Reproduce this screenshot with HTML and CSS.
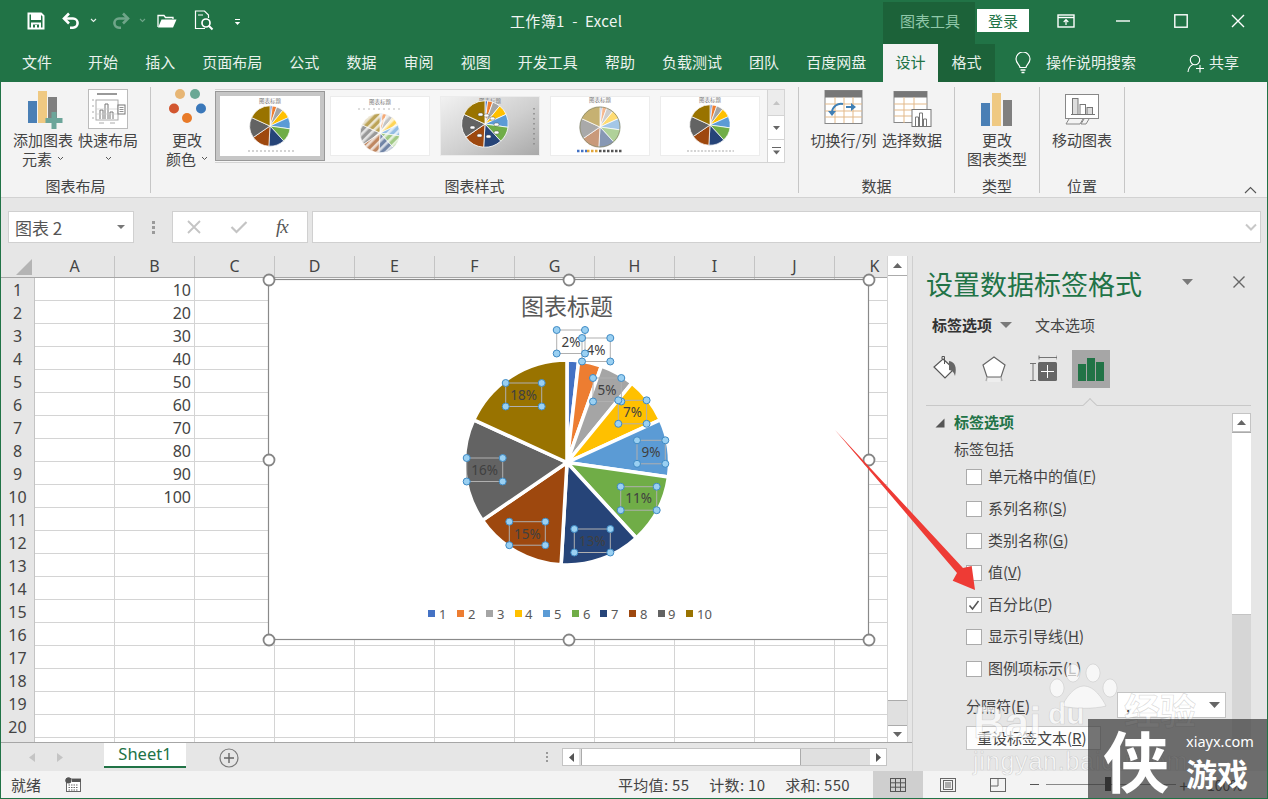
FILE: index.html
```html
<!DOCTYPE html>
<html lang="zh-CN">
<head>
<meta charset="utf-8">
<title>工作簿1 - Excel</title>
<link rel="stylesheet" href="styles.css">
</head>
<body>
<svg class="defs" width="0" height="0" aria-hidden="true">
  <defs>
    <g id="pie" class="pie">
      <path fill="#4472c4" d="M0 0L0 -101A101 101 0 0 1 11.5 -100.3Z"/>
      <path fill="#ed7d31" d="M0 0L11.5 -100.3A101 101 0 0 1 33.9 -95.1Z"/>
      <path fill="#a5a5a5" d="M0 0L33.9 -95.1A101 101 0 0 1 63.9 -78.2Z"/>
      <path fill="#ffc000" d="M0 0L63.9 -78.2A101 101 0 0 1 91.9 -42Z"/>
      <path fill="#5b9bd5" d="M0 0L91.9 -42A101 101 0 0 1 100 14.4Z"/>
      <path fill="#70ad47" d="M0 0L100 14.4A101 101 0 0 1 68.3 74.4Z"/>
      <path fill="#264478" d="M0 0L68.3 74.4A101 101 0 0 1 -5.8 100.8Z"/>
      <path fill="#9e480e" d="M0 0L-5.8 100.8A101 101 0 0 1 -83.4 57Z"/>
      <path fill="#636363" d="M0 0L-83.4 57A101 101 0 0 1 -91.9 -42Z"/>
      <path fill="#997300" d="M0 0L-91.9 -42A101 101 0 0 1 0 -101Z"/>
    </g>
    <pattern id="stripes" width="6" height="6" patternUnits="userSpaceOnUse" patternTransform="rotate(45)">
      <rect width="6" height="6" fill="none"/><rect width="2.6" height="6" fill="#fff" fill-opacity=".72"/>
    </pattern>
    <linearGradient id="silver" x1="0" x2="1" y1="0" y2="1">
      <stop offset="0" stop-color="#f2f2f2"/><stop offset=".55" stop-color="#cfcfcf"/><stop offset="1" stop-color="#a8a8a8"/>
    </linearGradient>
  </defs>
</svg>

<div class="app">
  <header class="titlebar">
    <div class="qat">
      <svg class="q-save" width="18" height="18" viewBox="0 0 18 18"><path d="M1.5 1.5h12.5l2.5 2.5v12.5h-15z" fill="none" stroke="#fff" stroke-width="2"/><rect x="4" y="2" width="10" height="6" fill="#fff"/><path d="M5 16.5v-5h8v5" fill="none" stroke="#fff" stroke-width="2"/><rect x="8" y="13" width="2" height="3" fill="#fff"/></svg>
      <svg class="q-undo" width="20" height="18" viewBox="0 0 20 18"><path d="M4 6.5h8a4.6 4.6 0 0 1 0 9.2H9" fill="none" stroke="#fff" stroke-width="2.6"/><path d="M8 1.5L3 6.5l5 5" fill="none" stroke="#fff" stroke-width="2.6"/></svg>
      <svg class="q-caret" width="7" height="5" viewBox="0 0 7 5"><path d="M1 1l2.5 2.5L6 1" fill="none" stroke="#e8f0eb" stroke-width="1.1"/></svg>
      <svg class="q-redo" width="20" height="18" viewBox="0 0 20 18"><path d="M16 6.5H8a4.6 4.6 0 0 0 0 9.2h2" fill="none" stroke="#6fa589" stroke-width="2.6"/><path d="M12 1.5l5 5-5 5" fill="none" stroke="#6fa589" stroke-width="2.6"/></svg>
      <svg class="q-caret2" width="7" height="5" viewBox="0 0 7 5"><path d="M1 1l2.5 2.5L6 1" fill="none" stroke="#6fa589" stroke-width="1.1"/></svg>
      <svg class="q-open" width="20" height="16" viewBox="0 0 20 16"><path d="M1 14V2.5h6l1.5 2H16V6" fill="none" stroke="#fff" stroke-width="1.3"/><path d="M1 14.5L4.5 6.5H19.5L16 14.5z" fill="#fff"/></svg>
      <svg class="q-prev" width="20" height="21" viewBox="0 0 20 21"><path d="M11 18.5H1.5V1h9l4 4v3" fill="none" stroke="#fff" stroke-width="1.2"/><circle cx="12" cy="13" r="4" fill="none" stroke="#fff" stroke-width="1.7"/><path d="M15 16l3.5 3.5" stroke="#fff" stroke-width="2"/><path d="M4 5h5" stroke="#fff"/></svg>
      <svg class="q-more" width="7" height="8" viewBox="0 0 7 8"><path d="M1 1.5h5" stroke="#fff"/><path d="M.8 4h5.4L3.5 7z" fill="#fff"/></svg>
    </div>
    <div class="doc-title">工作簿1&nbsp; - &nbsp;Excel</div>
    <div class="ctx-tag">图表工具</div>
    <div class="login">登录</div>
    <div class="winbtns">
      <span class="winbtn"><svg width="18" height="14" viewBox="0 0 18 14"><rect x="1" y="1" width="16" height="12" fill="none" stroke="#fff" stroke-width="1.4"/><path d="M1 3.5h16" stroke="#fff" stroke-width="1.4"/><path d="M9 11V6M6.7 8L9 5.7 11.3 8" fill="none" stroke="#fff" stroke-width="1.2"/></svg></span>
      <span class="winbtn"><svg width="14" height="2" viewBox="0 0 14 2"><path d="M0 1h14" stroke="#fff" stroke-width="1.4"/></svg></span>
      <span class="winbtn"><svg width="14" height="14" viewBox="0 0 14 14"><rect x=".8" y=".8" width="12.4" height="12.4" fill="none" stroke="#fff" stroke-width="1.4"/></svg></span>
      <span class="winbtn"><svg width="14" height="14" viewBox="0 0 14 14"><path d="M1 1l12 12M13 1L1 13" stroke="#fff" stroke-width="1.4"/></svg></span>
    </div>
  </header>

  <nav class="tabs">
    <span class="tab tab-file">文件</span>
    <span class="tab">开始</span>
    <span class="tab">插入</span>
    <span class="tab">页面布局</span>
    <span class="tab">公式</span>
    <span class="tab">数据</span>
    <span class="tab">审阅</span>
    <span class="tab">视图</span>
    <span class="tab">开发工具</span>
    <span class="tab">帮助</span>
    <span class="tab">负载测试</span>
    <span class="tab">团队</span>
    <span class="tab tab-last">百度网盘</span>
    <span class="tab-active">设计</span>
    <span class="tab-dark">格式</span>
    <svg class="bulb" width="16" height="22" viewBox="0 0 16 22"><path d="M5 15.5C4.6 12.5 1 11 1 7a7 7 0 0 1 14 0c0 4-3.600 5.500-4 8.500z" fill="none" stroke="#fff" stroke-width="1.2"/><path d="M5.500 18h5M6.500 20.500h3" stroke="#fff" stroke-width="1.300"/></svg>
    <span class="search">操作说明搜索</span>
    <svg class="person" width="18" height="19" viewBox="0 0 18 19"><circle cx="8" cy="6" r="4.700" fill="none" stroke="#fff" stroke-width="1.100"/><path d="M1 18c.5-4 2.500-6.500 5-7.500" fill="none" stroke="#fff" stroke-width="1.100"/><path d="M9 14.500h8M13 11v7.500" stroke="#fff" stroke-width="1.100"/></svg>
    <span class="share">共享</span>
  </nav>

  <section class="ribbon">
    <div class="group g1">
      <div class="g-body">
        <div class="bigbtn w60">
          <svg class="ico" width="44" height="44" viewBox="0 0 44 44"><rect x="7" y="14" width="9" height="22" fill="#4a7fb5"/><rect x="17" y="4" width="9" height="32" fill="#efc982"/><rect x="27" y="10" width="9" height="26" fill="#7f7f7f"/><path d="M33 25v17M24.500 33.500h17" stroke="#6ca59a" stroke-width="5"/></svg>
          <span class="bl">添加图表</span>
          <span class="bl">元素<svg class="chev" width="7" height="5" viewBox="0 0 7 5"><path d="M1 1l2.500 2.500L6 1" fill="none" stroke="#555"/></svg></span>
        </div>
        <div class="bigbtn w60">
          <svg class="ico" width="44" height="44" viewBox="0 0 44 44"><rect x="2.500" y="2.500" width="39" height="39" fill="#fff" stroke="#bbb"/><path d="M11 7h20" stroke="#999" stroke-width="2"/><path d="M6 13h2M6 19h2M6 25h2M6 31h2M13 36h5M24 36h5" stroke="#aaa"/><rect x="10" y="13" width="22" height="20" fill="none" stroke="#aaa"/><path d="M14 32v-9h3v9M19 32V17h3v15M24 32v-7h3v7" fill="none" stroke="#777"/><path d="M10 22h22M10 27h22" stroke="#ccc" stroke-width=".7"/><rect x="32" y="18" width="7" height="9" fill="#fff" stroke="#777"/><path d="M33.500 20.500h4M33.500 22.500h4M33.500 24.500h4" stroke="#777" stroke-width=".8"/></svg>
          <span class="bl">快速布局</span>
          <span class="bl"><svg class="chev-only" width="7" height="5" viewBox="0 0 7 5"><path d="M1 1l2.500 2.500L6 1" fill="none" stroke="#555"/></svg></span>
        </div>
      </div>
      <div class="g-label">图表布局</div>
    </div>

    <div class="group g2">
      <div class="g-body">
        <div class="bigbtn w44">
          <svg class="ico" width="44" height="44" viewBox="0 0 44 44"><circle cx="15" cy="7" r="5" fill="#e7b675"/><circle cx="30" cy="7" r="5" fill="#6aa895"/><circle cx="9" cy="21.500" r="5" fill="#d2562f"/><circle cx="36" cy="21.500" r="5" fill="#3a78ba"/><circle cx="22" cy="31" r="5" fill="#e87a28"/></svg>
          <span class="bl">更改</span>
          <span class="bl">颜色<svg class="chev" width="7" height="5" viewBox="0 0 7 5"><path d="M1 1l2.500 2.500L6 1" fill="none" stroke="#555"/></svg></span>
        </div>
        <div class="gallery">
          <div class="thumb thumb-sel">
            <svg width="100" height="60" viewBox="0 0 100 60"><text class="th-title" x="50" y="7">图表标题</text><use href="#pie" transform="translate(50 30) scale(.2)"/><path d="M28 55h47" stroke="#aaa" stroke-width="1.200" stroke-dasharray="2 2"/></svg>
          </div>
          <div class="thumb">
            <svg width="100" height="60" viewBox="0 0 100 60"><text class="th-title" x="50" y="8">图表标题</text><path d="M28 13h44" stroke="#bbb" stroke-width="1" stroke-dasharray="2 3"/><use href="#pie" transform="translate(50 37) scale(.195)" opacity=".65"/><circle cx="50" cy="37" r="19.500" fill="url(#stripes)"/></svg>
          </div>
          <div class="thumb thumb-m">
            <svg width="100" height="60" viewBox="0 0 100 60"><rect width="100" height="60" fill="url(#silver)"/><text class="th-title" x="50" y="7">图表标题</text><use href="#pie" transform="translate(45 28) scale(.23)"/><g fill="#fff" stroke="#555" stroke-width=".5"><rect x="38" y="17" width="5" height="3" rx="1.500"/><rect x="44" y="18" width="5" height="3" rx="1.500"/><rect x="50" y="21" width="5" height="3" rx="1.500"/><rect x="54" y="27" width="5" height="3" rx="1.500"/><rect x="54" y="35" width="5" height="3" rx="1.500"/><rect x="46" y="39" width="5" height="3" rx="1.500"/><rect x="37" y="38" width="5" height="3" rx="1.500"/><rect x="30" y="30" width="5" height="3" rx="1.500"/></g><path d="M94 12v38" stroke="#888" stroke-width="1.500" stroke-dasharray="1.500 3.500"/></svg>
          </div>
          <div class="thumb thumb-m">
            <svg width="100" height="60" viewBox="0 0 100 60"><text class="th-title" x="50" y="6">图表标题</text><use href="#pie" transform="translate(50 31) scale(.205)" opacity=".55"/><circle cx="50" cy="31" r="20" fill="none" stroke="#8d8d6c" stroke-width=".8"/><g stroke-width="2.500" stroke-dasharray="2.500 1.500"><path d="M27 55h10" stroke="#4472c4"/><path d="M37 55h12" stroke="#e0a53a"/><path d="M49 55h24" stroke="#555"/></g></svg>
          </div>
          <div class="thumb thumb-m">
            <svg width="100" height="60" viewBox="0 0 100 60"><text class="th-title" x="50" y="6">图表标题</text><use href="#pie" transform="translate(50 29) scale(.2)"/><path d="M27 55h47" stroke="#aaa" stroke-width="1.200" stroke-dasharray="2 1.500"/></svg>
          </div>
          <div class="gal-scroll">
            <span class="gs gs1"><svg width="7" height="4" viewBox="0 0 7 4"><path d="M0 4l3.500-4L7 4z" fill="#c4c4c4"/></svg></span>
            <span class="gs gs2"><svg width="7" height="4" viewBox="0 0 7 4"><path d="M0 0l3.500 4L7 0z" fill="#666"/></svg></span>
            <span class="gs gs3"><svg width="9" height="8" viewBox="0 0 9 8"><path d="M0 .5h9" stroke="#666"/><path d="M1 3.500l3.500 4 3.500-4z" fill="#666"/></svg></span>
          </div>
        </div>
      </div>
      <div class="g-label">图表样式</div>
    </div>

    <div class="group g3">
      <div class="g-body">
        <div class="bigbtn w65">
          <svg class="ico" width="44" height="44" viewBox="0 0 44 44"><rect x="3" y="3.500" width="37" height="33" fill="#fff" stroke="#888"/><rect x="3" y="3.500" width="37" height="7" fill="#777"/><path d="M3 17h37M3 24h37M3 30h37M13 10v26M22 10v26M31 10v26" stroke="#e3b989"/><path d="M10 25a9 9 0 0 1 11-8" fill="none" stroke="#3f7fb5" stroke-width="2"/><path d="M6 24l4 5 4-5z" fill="#3f7fb5"/><path d="M24 20h7" stroke="#3f7fb5" stroke-width="2"/><path d="M29 16l5 4-5 4z" fill="#3f7fb5"/></svg>
          <span class="bl">切换行/列</span>
        </div>
        <div class="bigbtn w60 ml6">
          <svg class="ico" width="44" height="44" viewBox="0 0 44 44"><rect x="4" y="4.500" width="33" height="31" fill="#fff" stroke="#888"/><rect x="4" y="4.500" width="33" height="6" fill="#777"/><path d="M4 17h33M4 23h33M4 29h33M14 10v26M24 10v26" stroke="#e3b989"/><rect x="22" y="22.500" width="19" height="17" fill="#fff" stroke="#777"/><path d="M25.500 39v-9h3v9M29.500 39V26h3v13M33.500 39v-7h3v7" fill="none" stroke="#777"/></svg>
          <span class="bl">选择数据</span>
        </div>
      </div>
      <div class="g-label">数据</div>
    </div>

    <div class="group g4">
      <div class="g-body gb-c">
        <div class="bigbtn w60">
          <svg class="ico" width="44" height="44" viewBox="0 0 44 44"><rect x="6" y="16" width="9" height="23" fill="#4a7fb5"/><rect x="17" y="6" width="9" height="33" fill="#efc982"/><rect x="28" y="13" width="9" height="26" fill="#7f7f7f"/></svg>
          <span class="bl">更改</span>
          <span class="bl">图表类型</span>
        </div>
      </div>
      <div class="g-label">类型</div>
    </div>

    <div class="group g5">
      <div class="g-body gb-c">
        <div class="bigbtn w60">
          <svg class="ico" width="44" height="44" viewBox="0 0 44 44"><rect x="5.500" y="7.500" width="33" height="24" fill="#fff" stroke="#888"/><path d="M11 27.500h24" stroke="#777"/><rect x="12.500" y="11.500" width="5.500" height="16" fill="#ddd" stroke="#777"/><rect x="20" y="17.500" width="5.500" height="10" fill="#fff" stroke="#777"/><rect x="27" y="20.500" width="5.500" height="7" fill="#ddd" stroke="#777"/><path d="M9 32l-3 5h14l3-5M24 32l-3 5h5l3-5" fill="none" stroke="#888"/></svg>
          <span class="bl">移动图表</span>
        </div>
      </div>
      <div class="g-label">位置</div>
    </div>
    <svg class="collapse" width="13" height="8" viewBox="0 0 13 8"><path d="M1 7l5.500-5.500L12 7" fill="none" stroke="#555" stroke-width="1.100"/></svg>
  </section>

  <div class="fbar">
    <div class="namebox"><span>图表 2</span><svg width="8" height="4" viewBox="0 0 8 4"><path d="M0 0l4 4 4-4z" fill="#777"/></svg></div>
    <div class="fdots"><i></i><i></i><i></i></div>
    <div class="fbtns">
      <svg width="16" height="14" viewBox="0 0 16 14"><path d="M2 1l12 12M14 1L2 13" stroke="#c4c4c4" stroke-width="1.800"/></svg>
      <svg width="18" height="14" viewBox="0 0 18 14"><path d="M1.500 7l5 5L16.500 2" fill="none" stroke="#c4c4c4" stroke-width="2.200"/></svg>
      <span class="fx">fx</span>
    </div>
    <div class="finput"><svg width="12" height="8" viewBox="0 0 12 8"><path d="M1 1.500l5 5 5-5" fill="none" stroke="#c8c8c8" stroke-width="2"/></svg></div>
  </div>

  <main class="main">
    <div class="leftcol">
      <div class="sheetrow">
        <div class="sheet">
          <div class="colhead">
            <span class="corner"><svg width="16" height="16" viewBox="0 0 16 16"><path d="M16 0v16H0z" fill="#b4b4b4"/></svg></span>
            <span class="ch">A</span><span class="ch">B</span><span class="ch">C</span><span class="ch">D</span><span class="ch">E</span><span class="ch">F</span><span class="ch">G</span><span class="ch">H</span><span class="ch">I</span><span class="ch">J</span><span class="ch">K</span>
          </div>
          <div class="rows">
            <div class="row"><span class="rh">1</span><span class="c"></span><span class="c n">10</span></div>
            <div class="row"><span class="rh">2</span><span class="c"></span><span class="c n">20</span></div>
            <div class="row"><span class="rh">3</span><span class="c"></span><span class="c n">30</span></div>
            <div class="row"><span class="rh">4</span><span class="c"></span><span class="c n">40</span></div>
            <div class="row"><span class="rh">5</span><span class="c"></span><span class="c n">50</span></div>
            <div class="row"><span class="rh">6</span><span class="c"></span><span class="c n">60</span></div>
            <div class="row"><span class="rh">7</span><span class="c"></span><span class="c n">70</span></div>
            <div class="row"><span class="rh">8</span><span class="c"></span><span class="c n">80</span></div>
            <div class="row"><span class="rh">9</span><span class="c"></span><span class="c n">90</span></div>
            <div class="row"><span class="rh">10</span><span class="c"></span><span class="c n">100</span></div>
            <div class="row"><span class="rh">11</span></div>
            <div class="row"><span class="rh">12</span></div>
            <div class="row"><span class="rh">13</span></div>
            <div class="row"><span class="rh">14</span></div>
            <div class="row"><span class="rh">15</span></div>
            <div class="row"><span class="rh">16</span></div>
            <div class="row"><span class="rh">17</span></div>
            <div class="row"><span class="rh">18</span></div>
            <div class="row"><span class="rh">19</span></div>
            <div class="row"><span class="rh">20</span></div>
            <div class="row"><span class="rh"></span></div>
          </div>
        </div>
        <div class="vscroll">
          <span class="vs-btn"><svg width="9" height="5" viewBox="0 0 9 5"><path d="M0 5l4.500-5L9 5z" fill="#666"/></svg></span>
          <span class="vs-thumb"></span>
          <span class="vs-track"></span>
          <span class="vs-btn vs-btn-b"><svg width="9" height="5" viewBox="0 0 9 5"><path d="M0 0l4.500 5L9 0z" fill="#666"/></svg></span>
        </div>
      </div>
      <div class="tabsrow">
        <svg class="nav-l" width="6" height="9" viewBox="0 0 6 9"><path d="M6 0v9L0 4.500z" fill="#c4c4c4"/></svg>
        <svg class="nav-r" width="6" height="9" viewBox="0 0 6 9"><path d="M0 0v9l6-4.500z" fill="#c4c4c4"/></svg>
        <div class="sheet-tab">Sheet1</div>
        <svg class="addsheet" width="20" height="20" viewBox="0 0 20 20"><circle cx="10" cy="10" r="9" fill="none" stroke="#7a7a7a" stroke-width="1.200"/><path d="M10 5v10M5 10h10" stroke="#666" stroke-width="1.400"/></svg>
        <div class="hdots"><i></i><i></i><i></i></div>
        <div class="hscroll">
          <span class="hs-btn"><svg width="5" height="9" viewBox="0 0 5 9"><path d="M5 0v9L0 4.500z" fill="#555"/></svg></span>
          <span class="hs-thumb"></span>
          <span class="hs-track"></span>
          <span class="hs-btn"><svg width="5" height="9" viewBox="0 0 5 9"><path d="M0 0v9l5-4.500z" fill="#555"/></svg></span>
        </div>
      </div>
    </div>

    <aside class="pane">
      <div class="pane-head">
        <h2 class="pane-title">设置数据标签格式</h2>
        <svg class="pane-caret" width="11" height="6" viewBox="0 0 11 6"><path d="M0 0l5.500 6L11 0z" fill="#7a7a7a"/></svg>
        <svg class="pane-x" width="12" height="12" viewBox="0 0 12 12"><path d="M.5.500l11 11M11.500.500l-11 11" stroke="#666" stroke-width="1.400"/></svg>
      </div>
      <div class="pane-tabs">
        <b>标签选项</b>
        <svg class="pt-caret" width="12" height="6" viewBox="0 0 12 6"><path d="M0 0l6 6 6-6z" fill="#7a7a7a"/></svg>
        <span>文本选项</span>
      </div>
      <div class="pane-icons">
        <span class="pi"><svg width="28" height="28" viewBox="0 0 28 28"><path d="M12 7l11 10-9 9L3 15z" transform="translate(0 -3)" fill="#fff" stroke="#555" stroke-width="1.200"/><path d="M11 4V1.500h2.500V9" fill="none" stroke="#555"/><path d="M18 6c6 1 8 6 6 15-1-4-3-6-6-6z" fill="#666"/></svg></span>
        <span class="pi"><svg width="28" height="28" viewBox="0 0 28 28"><path d="M14 2l11 8-4 12H7L3 10z" fill="#fff" stroke="#666" stroke-width="1.200"/><path d="M7 22l-1 4M21 22l1 4" stroke="#aaa" stroke-width="1.200"/><rect x="8" y="23" width="12" height="4" fill="#eee"/></svg></span>
        <span class="pi"><svg width="28" height="28" viewBox="0 0 28 28"><rect x="9" y="7" width="19" height="19" rx="1.500" fill="#666"/><path d="M10 2.500h18M10 .500v4M28 .500v4M1 8.500h6M1 25.500h6M4 8.500v17" fill="none" stroke="#666" stroke-width=".9"/><path d="M18.500 10v13M12 16.500h13" stroke="#fff"/></svg></span>
        <span class="pi pi-on"><svg width="28" height="28" viewBox="0 0 28 28"><path d="M1 9h8v17H1zM10 3h8v23h-8zM19 7h8v19h-8z" fill="#217346"/></svg></span>
      </div>
      <div class="pane-rule"><i></i></div>
      <div class="pane-body">
        <div class="opts">
          <div class="sec"><svg width="10" height="10" viewBox="0 0 10 10"><path d="M9.500.500v9h-9z" fill="#555"/></svg><b>标签选项</b></div>
          <div class="sub">标签包括</div>
          <label class="chk"><span class="box"></span>单元格中的值(<u>F</u>)</label>
          <label class="chk"><span class="box"></span>系列名称(<u>S</u>)</label>
          <label class="chk"><span class="box"></span>类别名称(<u>G</u>)</label>
          <label class="chk"><span class="box"></span>值(<u>V</u>)</label>
          <label class="chk"><span class="box"><svg width="14" height="14" viewBox="0 0 14 14"><path d="M2.500 7.500l3 3.500 6-8" fill="none" stroke="#555" stroke-width="1.500"/></svg></span>百分比(<u>P</u>)</label>
          <label class="chk"><span class="box"></span>显示引导线(<u>H</u>)</label>
          <label class="chk"><span class="box"></span>图例项标示(<u>L</u>)</label>
          <div class="sep"><span>分隔符(<u>E</u>)</span><div class="select"><span>,</span><svg width="11" height="6" viewBox="0 0 11 6"><path d="M0 0l5.500 6L11 0z" fill="#666"/></svg></div></div>
          <div class="reset">重设标签文本(<u>R</u>)</div>
        </div>
        <div class="pscroll">
          <span class="ps-btn"><svg width="9" height="5" viewBox="0 0 9 5"><path d="M0 5l4.500-5L9 5z" fill="#666"/></svg></span>
          <span class="ps-thumb"></span>
        </div>
      </div>
    </aside>
  </main>

  <footer class="status">
    <span class="st-ready">就绪</span>
    <svg class="st-macro" width="16" height="15" viewBox="0 0 16 15"><circle cx="3.500" cy="3.500" r="3" fill="#555"/><rect x="1.500" y="2" width="14" height="12.500" fill="#fff" stroke="#666"/><rect x="7" y="2" width="9" height="3" fill="#555"/><circle cx="3.500" cy="3.500" r="3" fill="#555"/><path d="M3.500 8h10M3.500 10.500h10M3.500 13h10" stroke="#666" stroke-dasharray="1.500 1"/></svg>
    <span class="st-m st-avg">平均值: 55</span>
    <span class="st-m">计数: 10</span>
    <span class="st-m">求和: 550</span>
    <span class="view view-on"><svg width="16" height="14" viewBox="0 0 16 14"><rect x=".5" y=".5" width="15" height="13" fill="none" stroke="#555"/><path d="M5.500 0v14M10.500 0v14M0 4.800h16M0 9.200h16" stroke="#555"/></svg></span>
    <span class="view"><svg width="16" height="14" viewBox="0 0 16 14"><rect x=".5" y=".5" width="15" height="13" fill="none" stroke="#666"/><rect x="3.500" y="2.500" width="9" height="9" fill="none" stroke="#666"/><path d="M5 5h6M5 7h6M5 9h6" stroke="#666"/></svg></span>
    <span class="view"><svg width="16" height="14" viewBox="0 0 16 14"><rect x=".5" y=".5" width="15" height="13" fill="none" stroke="#666"/><path d="M8 0v8M0 8h8" stroke="#666"/></svg></span>
    <span class="zminus"></span>
    <span class="zslider"><i></i></span>
    <span class="zplus">+</span>
    <span class="zpct">100%</span>
  </footer>

  <svg class="chart" width="614" height="376" viewBox="262 272 614 376">
    <rect class="c-frame" x="268.500" y="279.500" width="600" height="360"/>
    <text class="c-title" x="567" y="315">图表标题</text>
    <use href="#pie" transform="translate(567 462.500) scale(1.015)"/>
    <g class="c-boxes">
      <rect x="556.700" y="330" width="28.300" height="23.500"/>
      <rect x="582" y="338" width="28.300" height="23.500"/>
      <rect x="593" y="378" width="28.300" height="23.500"/>
      <rect x="618.300" y="400.300" width="28.300" height="23.500"/>
      <rect x="637" y="440.300" width="28.300" height="23.500"/>
      <rect x="620.700" y="486.700" width="36" height="23.500"/>
      <rect x="574.300" y="529" width="36" height="23.500"/>
      <rect x="509.300" y="521.700" width="36" height="23.500"/>
      <rect x="466.700" y="458" width="36" height="23.500"/>
      <rect x="505.700" y="383" width="36" height="23.500"/>
    </g>
    <g class="c-labels">
      <text x="571" y="347">2%</text>
      <text x="596" y="355">4%</text>
      <text x="607" y="395">5%</text>
      <text x="632.500" y="417">7%</text>
      <text x="651" y="457">9%</text>
      <text x="638.700" y="503">11%</text>
      <text x="592.300" y="546">13%</text>
      <text x="527.300" y="538.500">15%</text>
      <text x="484.700" y="475">16%</text>
      <text x="523.700" y="400">18%</text>
    </g>
    <g class="c-dots">
      <circle cx="556.700" cy="330" r="3.500"/><circle cx="585" cy="330" r="3.500"/><circle cx="556.700" cy="353.500" r="3.500"/><circle cx="585" cy="353.500" r="3.500"/>
      <circle cx="582" cy="338" r="3.500"/><circle cx="610.300" cy="338" r="3.500"/><circle cx="582" cy="361.500" r="3.500"/><circle cx="610.300" cy="361.500" r="3.500"/>
      <circle cx="593" cy="378" r="3.500"/><circle cx="621.300" cy="378" r="3.500"/><circle cx="593" cy="401.500" r="3.500"/><circle cx="621.300" cy="401.500" r="3.500"/>
      <circle cx="618.300" cy="400.300" r="3.500"/><circle cx="646.600" cy="400.300" r="3.500"/><circle cx="618.300" cy="423.800" r="3.500"/><circle cx="646.600" cy="423.800" r="3.500"/>
      <circle cx="637" cy="440.300" r="3.500"/><circle cx="665.300" cy="440.300" r="3.500"/><circle cx="637" cy="463.800" r="3.500"/><circle cx="665.300" cy="463.800" r="3.500"/>
      <circle cx="620.700" cy="486.700" r="3.500"/><circle cx="656.700" cy="486.700" r="3.500"/><circle cx="620.700" cy="510.200" r="3.500"/><circle cx="656.700" cy="510.200" r="3.500"/>
      <circle cx="574.300" cy="529" r="3.500"/><circle cx="610.300" cy="529" r="3.500"/><circle cx="574.300" cy="552.500" r="3.500"/><circle cx="610.300" cy="552.500" r="3.500"/>
      <circle cx="509.300" cy="521.700" r="3.500"/><circle cx="545.300" cy="521.700" r="3.500"/><circle cx="509.300" cy="545.200" r="3.500"/><circle cx="545.300" cy="545.200" r="3.500"/>
      <circle cx="466.700" cy="458" r="3.500"/><circle cx="502.700" cy="458" r="3.500"/><circle cx="466.700" cy="481.500" r="3.500"/><circle cx="502.700" cy="481.500" r="3.500"/>
      <circle cx="505.700" cy="383" r="3.500"/><circle cx="541.700" cy="383" r="3.500"/><circle cx="505.700" cy="406.500" r="3.500"/><circle cx="541.700" cy="406.500" r="3.500"/>
    </g>
    <g class="c-legend">
      <rect x="428" y="610" width="7" height="7" fill="#4472c4"/><text x="439" y="619">1</text>
      <rect x="457" y="610" width="7" height="7" fill="#ed7d31"/><text x="468" y="619">2</text>
      <rect x="486" y="610" width="7" height="7" fill="#a5a5a5"/><text x="497" y="619">3</text>
      <rect x="515" y="610" width="7" height="7" fill="#ffc000"/><text x="525" y="619">4</text>
      <rect x="543" y="610" width="7" height="7" fill="#5b9bd5"/><text x="554" y="619">5</text>
      <rect x="572" y="610" width="7" height="7" fill="#70ad47"/><text x="583" y="619">6</text>
      <rect x="600" y="610" width="7" height="7" fill="#264478"/><text x="611" y="619">7</text>
      <rect x="629" y="610" width="7" height="7" fill="#9e480e"/><text x="640" y="619">8</text>
      <rect x="658" y="610" width="7" height="7" fill="#636363"/><text x="668" y="619">9</text>
      <rect x="686" y="610" width="7" height="7" fill="#997300"/><text x="697" y="619">10</text>
    </g>
    <g class="c-handles">
      <circle cx="269" cy="280" r="5.500"/><circle cx="569" cy="280" r="5.500"/><circle cx="869" cy="280" r="5.500"/>
      <circle cx="269" cy="460" r="5.500"/><circle cx="869" cy="460" r="5.500"/>
      <circle cx="269" cy="640" r="5.500"/><circle cx="569" cy="640" r="5.500"/><circle cx="869" cy="640" r="5.500"/>
    </g>
  </svg>

  <svg class="arrow" width="150" height="170" viewBox="830 425 150 170"><path d="M835 430L963 568 971.700 566 975 590 952.700 580.700 957 573z" fill="#ee3b35"/></svg>

  <div class="wm-baidu">
    <svg width="300" height="120" viewBox="960 660 300 120">
      <g class="paw">
        <ellipse cx="1057" cy="688" rx="7" ry="9"/><ellipse cx="1073" cy="673" rx="7" ry="9"/><ellipse cx="1093" cy="673" rx="7" ry="9"/><ellipse cx="1110" cy="688" rx="7" ry="9"/>
        <path d="M1084 686c10 0 18 12 22 20-12 3-32 3-44 0 4-8 12-20 22-20z"/>
      </g>
      <text class="wm-bai" x="973" y="738">Bai</text>
      <text class="wm-du" x="1048" y="724">du</text>
      <text class="wm-jy" x="1124" y="725">经验</text>
      <text class="wm-url" x="973" y="770">jingyan.baidu.com</text>
    </svg>
  </div>

  <div class="wm-xia">
    <span class="xia-big">侠</span>
    <div class="xia-right">
      <span class="xia-url">xiayx.com</span>
      <span class="xia-game">游戏</span>
    </div>
  </div>
</div>
</body>
</html>
```
FILE: styles.css
```css
* { box-sizing: border-box; }
html, body { margin: 0; padding: 0; }
body { width: 1268px; height: 799px; overflow: hidden; font-family: "Noto Sans CJK SC", "Noto Sans", sans-serif; color: #444; background: #e6e6e6; }
.defs { position: absolute; }
.pie path { stroke: #fff; stroke-width: 3.5; stroke-linejoin: miter; }

.app { position: relative; width: 1268px; height: 799px; display: flex; flex-direction: column; border-left: 1px solid #217346; border-right: 1px solid #217346; border-bottom: 1px solid #217346; overflow: hidden; }

/* title bar */
.titlebar { flex: none; height: 44px; margin-left: -1px; margin-right: -1px; background: #217346; display: flex; align-items: flex-start; color: #fff; }
.qat { width: 510px; height: 41px; position: relative; display: flex; align-items: center; }
.q-save { margin-left: 27px; }
.q-undo { margin-left: 16px; }
.q-caret { margin-left: 9px; }
.q-redo { margin-left: 14px; }
.q-caret2 { margin-left: 8px; }
.q-open { margin-left: 11px; }
.q-prev { margin-left: 17px; }
.q-more { margin-left: 20px; margin-top: 2px; }
.doc-title { width: 373px; height: 41px; line-height: 41px; font-size: 15px; letter-spacing: .35px; color: #f0f5f2; white-space: nowrap; }
.ctx-tag { width: 92px; height: 42px; margin-top: 2px; background: #1c6239; color: #8fc7a8; font-size: 15px; line-height: 38px; text-align: center; padding-left: 2px; }
.login { width: 52px; height: 23px; margin: 9px 0 0 2px; background: #fff; color: #217346; font-size: 15px; line-height: 23px; text-align: center; }
.winbtns { display: flex; margin-left: 8px; }
.winbtn { width: 57.5px; height: 41px; display: flex; align-items: center; justify-content: center; }

/* tabs */
.tabs { flex: none; height: 38px; margin-left: -1px; margin-right: -1px; background: #217346; display: flex; align-items: stretch; color: #eaf2ed; font-size: 15px; line-height: 36px; }
.tab { margin-right: 27.1px; white-space: nowrap; }
.tab-file { margin-left: 22px; margin-right: 36px; }
.tab-last { margin-right: 16.8px; }
.tab-active { width: 55px; background: #f3f3f3; color: #217346; text-align: center; }
.tab-dark { width: 57px; background: #1c6239; color: #e6f0ea; text-align: center; }
.bulb { margin: 8px 0 0 20px; }
.search { margin-left: 15px; }
.person { margin: 10px 0 0 51px; }
.share { margin-left: 4px; }

/* ribbon */
.ribbon { flex: none; height: 116px; background: #f3f3f3; border-bottom: 1px solid #d2d2d2; display: flex; align-items: flex-start; }
.group { height: 106px; margin-top: 5px; border-right: 1px solid #c6c6c6; display: flex; flex-direction: column; }
.g-body { flex: 1; display: flex; align-items: flex-start; }
.gb-c { justify-content: center; }
.g-label { flex: none; height: 14px; font-size: 15px; line-height: 14px; text-align: center; color: #444; }
.g1 { width: 150px; }
.g1 .g-body { padding-left: 12px; gap: 5px; }
.g2 { width: 648px; }
.g2 .g-body { padding-left: 14px; gap: 6px; }
.g3 { width: 156px; }
.g3 .g-body { padding-left: 12px; }
.g4 { width: 85px; }
.g5 { width: 85px; }
.ml6 { margin-left: 6px; }
.bigbtn { display: flex; flex-direction: column; align-items: center; font-size: 15px; color: #444; }
.w60 { width: 60px; }
.w44 { width: 44px; }
.w65 { width: 65px; }
.ico { display: block; flex: none; margin-bottom: -1px; }
.bl { height: 19px; line-height: 19px; white-space: nowrap; display: flex; align-items: center; }
.chev { margin-left: 5px; }
.gallery { width: 569px; height: 74px; margin-top: 2px; border-top: 1px solid #d4d4d4; border-bottom: 1px solid #d4d4d4; display: flex; align-items: center; background: #f6f6f6; }
.thumb { width: 100px; height: 60px; background: #fff; border: 0; margin-left: 5px; flex: none; outline: 1px solid #ececec; outline-offset: -1px; }
.thumb svg { display: block; }
.thumb-sel { width: 110px; height: 70px; margin-left: 0; border: 5px solid #c6c6c6; outline: 1px solid #999; }
.thumb-m { margin-left: 10px; }
.th-title { font-size: 5.5px; text-anchor: middle; fill: #777; }
.gal-scroll { width: 18px; height: 74px; margin-left: 7px; display: flex; flex-direction: column; flex: none; border: 1px solid #d4d4d4; }
.gs { display: flex; align-items: center; justify-content: center; border-bottom: 1px solid #d4d4d4; background: #fff; }
.gs1 { height: 26px; background: #ececec; }
.gs2 { height: 24px; }
.gs3 { flex: 1; border-bottom: 0; }
.collapse { margin: 104px 0 0 119px; }

/* formula bar */
.fbar { flex: none; height: 58px; padding: 13px 6px 13px 7px; display: flex; background: #e6e6e6; }
.namebox { width: 126px; height: 32px; background: #fff; border: 1px solid #d0d0d0; display: flex; align-items: center; justify-content: space-between; padding: 0 8px 0 6px; font-size: 17px; color: #555; }
.fdots { width: 38px; display: flex; flex-direction: column; align-items: center; justify-content: center; gap: 2px; }
.fdots i { width: 3px; height: 3px; background: #9a9a9a; display: block; }
.fbtns { width: 136px; height: 32px; background: #fff; border: 1px solid #d0d0d0; display: flex; align-items: center; padding-left: 13px; }
.fbtns svg + svg { margin-left: 28px; }
.fx { margin-left: 28px; font-family: "Liberation Serif", serif; font-style: italic; font-weight: 400; font-size: 19px; line-height: 30px; color: #555; letter-spacing: -1px; }
.finput { flex: 1; margin-left: 4px; height: 32px; background: #fff; border: 1px solid #d0d0d0; display: flex; align-items: center; justify-content: flex-end; padding-right: 3px; }

/* main */
.main { flex: none; height: 515px; display: flex; }
.leftcol { width: 911px; display: flex; flex-direction: column; }
.sheetrow { height: 486px; display: flex; }
.sheet { width: 886px; height: 486px; overflow: hidden; font-family: "Noto Sans", sans-serif; font-size: 16px; color: #444; }
.colhead { height: 22px; display: flex; background: #e6e6e6; border-bottom: 1px solid #a6a6a6; }
.corner { width: 34px; flex: none; display: flex; justify-content: flex-end; align-items: flex-end; padding: 0 3px 2px 0; }
.corner svg { display: block; }
.ch { width: 80px; flex: none; text-align: center; line-height: 20px; border-right: 1px solid #c4c4c4; font-size: 16px; }
.rows { background: #fff linear-gradient(90deg, #d4d4d4 1px, transparent 1px) 33px 0 / 80px 100% repeat-x; }
.row { height: 23px; display: flex; border-bottom: 1px solid #d4d4d4; line-height: 25px; }
.rh { width: 34px; flex: none; background: #e6e6e6; border-right: 1px solid #c4c4c4; text-align: center; margin-bottom: -1px; }
.c { width: 80px; flex: none; }
.n { text-align: right; padding-right: 4px; }
.vscroll { width: 21px; height: 486px; background: #e0e0e0; margin-left: 0; border-left: 1px solid #d4d4d4; border-right: 1px solid #d4d4d4; display: flex; flex-direction: column; }
.vs-btn { height: 20px; background: #fff; display: flex; align-items: center; justify-content: center; flex: none; border-bottom: 1px solid #ababab; }
.vs-btn-b { height: 17px; border-top: 1px solid #ababab; border-bottom: 0; }
.vs-thumb { height: 425px; background: #fff; flex: none; border-bottom: 1px solid #ababab; }
.vs-track { flex: 1; }

.tabsrow { height: 29px; display: flex; align-items: flex-start; background: #e6e6e6; border-top: 1px solid #a6a6a6; }
.nav-l { margin: 10px 0 0 28px; }
.nav-r { margin: 10px 0 0 22px; }
.sheet-tab { width: 82px; height: 25px; margin: 0 0 0 41px; background: #fff; border-bottom: 2px solid #217346; color: #217346; font-family: "Noto Sans", sans-serif; font-size: 16.5px; line-height: 21px; text-align: center; }
.addsheet { margin: 5px 0 0 33px; }
.hdots { width: 16px; margin: 9px 0 0 300px; display: flex; flex-direction: column; align-items: center; gap: 2px; }
.hdots i { width: 2px; height: 2px; background: #999; display: block; }
.hscroll { width: 325px; height: 18px; margin: 5px 0 0 7px; background: #e0e0e0; display: flex; border: 1px solid #c4c4c4; }
.hs-btn { width: 16px; flex: none; background: #fff; display: flex; align-items: center; justify-content: center; }
.hs-thumb { width: 220px; margin-left: 2px; background: #fff; border-left: 1px solid #ababab; border-right: 1px solid #ababab; }
.hs-track { flex: 1; }

/* pane */
.pane { width: 355px; height: 515px; background: #e6e6e6; border-left: 1px solid #cfcfcf; overflow: hidden; }
.pane-head { display: flex; align-items: center; height: 30px; margin-top: 13px; padding-left: 13px; }
.pane-title { margin: 0; width: 216px; font-size: 27px; font-weight: 400; line-height: 30px; color: #217346; white-space: nowrap; }
.pane-caret { margin: -4px 0 0 40px; }
.pane-x { margin: -4px 0 0 40px; }
.pane-tabs { display: flex; align-items: center; height: 20px; margin-top: 16px; padding-left: 19px; font-size: 15px; line-height: 20px; color: #444; }
.pane-tabs b { color: #333; }
.pt-caret { margin-left: 8px; }
.pane-tabs span { margin-left: 23px; }
.pane-icons { display: flex; height: 38px; margin-top: 15px; padding-left: 13px; }
.pi { width: 38px; height: 38px; margin-right: 11px; display: flex; align-items: center; justify-content: center; }
.pi-on { background: #a6a6a6; margin-left: -1px; }
.pane-rule { position: relative; height: 1px; margin: 17px 16px 0 13px; background: #c8c8c8; }
.pane-rule i { position: absolute; left: 159px; top: -5px; width: 10px; height: 10px; background: #e6e6e6; border-left: 1px solid #c8c8c8; border-top: 1px solid #c8c8c8; transform: rotate(45deg); }
.pane-body { display: flex; margin-top: 7px; height: 350px; }
.opts { width: 319px; padding-left: 41px; font-size: 15px; color: #444; }
.sec { height: 20px; display: flex; align-items: center; line-height: 18px; color: #217346; margin-left: -19px; }
.sec b { margin-left: 9px; margin-top: -2px; }
.sub { height: 21px; margin-top: 7px; line-height: 18px; }
.chk { height: 32px; display: flex; align-items: flex-start; padding-left: 12px; line-height: 30px; white-space: nowrap; }
.box { width: 16px; height: 16px; flex: none; margin: 8px 6px 0 0; background: #fff; border: 1px solid #ababab; display: flex; align-items: center; justify-content: center; }
.sep { height: 40px; display: flex; align-items: center; padding-left: 12px; }
.sep > span { width: 151px; white-space: nowrap; }
.select { width: 109px; height: 26px; background: #fff; border: 1px solid #c4c4c4; display: flex; align-items: center; justify-content: space-between; padding: 0 5px 0 8px; }
.reset { width: 135px; height: 24px; margin: 1px 0 0 12px; background: #fdfdfd; border: 1px solid #c4c4c4; line-height: 21px; padding-left: 10px; white-space: nowrap; }
.pscroll { width: 19px; height: 337px; background: #d6d6d6; display: flex; flex-direction: column; }
.ps-btn { height: 19px; flex: none; background: #fff; border: 1px solid #c4c4c4; display: flex; align-items: center; justify-content: center; }
.ps-thumb { height: 183px; background: #fff; border-top: 1px solid #ababab; border-bottom: 1px solid #c4c4c4; }

/* status */
.status { flex: 1; display: flex; align-items: center; background: #f3f3f3; font-size: 15px; color: #444; white-space: nowrap; }
.st-ready { margin-left: 10px; }
.st-macro { margin-left: 24px; }
.st-m { margin-right: 20px; letter-spacing: .3px; }
.st-avg { margin-left: 537px; }
.view { width: 50px; height: 100%; display: flex; align-items: center; justify-content: center; }
.view-on { background: #cfcfcf; margin-left: auto; }
.zminus { width: 9px; height: 1px; background: #555; margin-left: 7px; }
.zslider { position: relative; width: 130px; height: 1px; background: #888; margin-left: 7px; }
.zslider i { position: absolute; left: 59px; top: -7px; width: 6px; height: 14px; background: #333; }
.zplus { margin-left: 1px; font-size: 16px; width: 14px; text-align: center; }
.zpct { margin: 0 22px 0 16px; width: 38px; font-size: 14px; }

/* overlays */
.chart { position: absolute; left: 261px; top: 272px; overflow: visible; }
.c-frame { fill: #fff; stroke: #8a8a8a; stroke-width: 1.2; }
.c-title { font-size: 23px; fill: #595959; text-anchor: middle; }
.c-boxes rect { fill: none; stroke: #b0b0b0; stroke-width: 1; }
.c-labels text { font-family: "Noto Sans", sans-serif; font-size: 13.5px; fill: #404040; text-anchor: middle; }
.c-dots circle { fill: #9ad0f2; stroke: #3e8ac4; stroke-width: 1; }
.c-legend text { font-family: "Noto Sans", sans-serif; font-size: 13px; fill: #595959; }
.c-handles circle { fill: #fff; stroke: #858585; stroke-width: 1.8; }
.arrow { position: absolute; left: 829px; top: 425px; }

.wm-baidu { position: absolute; left: 959px; top: 660px; width: 300px; height: 120px; }
.wm-baidu text { fill: #fff; fill-opacity: .68; stroke: #8a8a8a; stroke-opacity: .3; stroke-width: .7; }
.paw { fill: #fff; fill-opacity: .68; stroke: #8a8a8a; stroke-opacity: .3; stroke-width: .7; }
.wm-bai { font-family: "Liberation Sans", sans-serif; font-weight: 700; font-size: 44px; }
.wm-du { font-family: "Liberation Sans", sans-serif; font-weight: 700; font-size: 30px; }
.wm-jy { font-size: 36px; font-weight: 700; }
.wm-url { font-family: "Liberation Sans", sans-serif; font-size: 25px; letter-spacing: .8px; }

.wm-xia { position: absolute; right: -1px; bottom: -1px; width: 180px; height: 80px; background: rgba(50, 50, 50, .68); color: #fff; display: flex; }
.xia-big { width: 98px; padding-left: 15px; font-size: 66px; font-weight: 700; line-height: 78px; white-space: nowrap; }
.xia-right { display: flex; flex-direction: column; }
.xia-url { font-family: "Noto Sans", sans-serif; font-size: 14.5px; line-height: 20px; margin-top: 12px; }
.xia-game { font-size: 31px; font-weight: 700; line-height: 40px; margin-top: 2px; }
```
